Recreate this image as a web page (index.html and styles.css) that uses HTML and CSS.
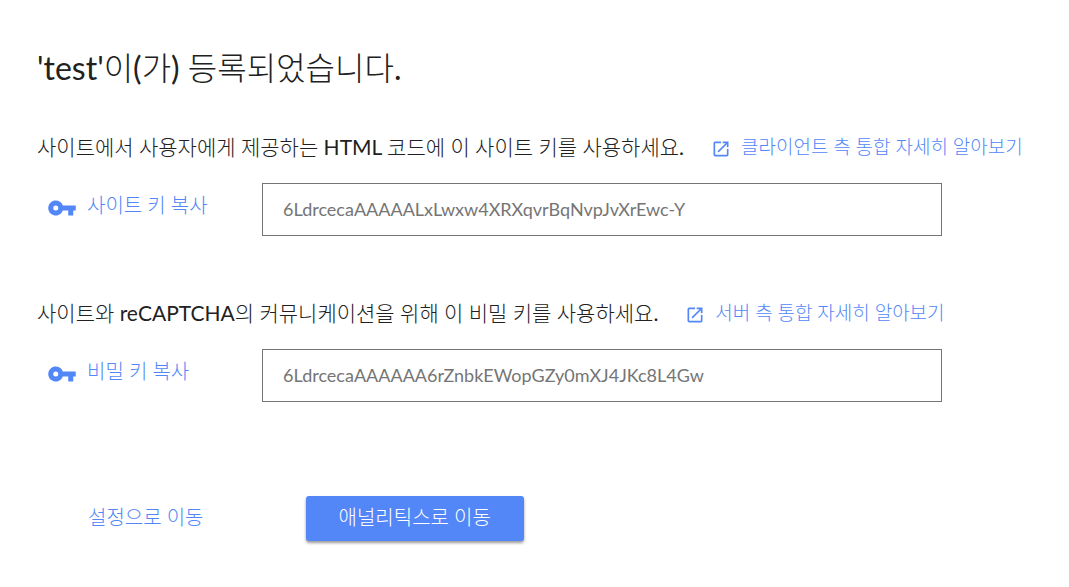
FILE: index.html
```html
<!DOCTYPE html>
<html lang="ko">
<head>
<meta charset="utf-8">
<meta name="viewport" content="width=device-width, initial-scale=1">
<title>reCAPTCHA</title>
<link rel="stylesheet" href="styles.css">
</head>
<body>
<svg class="sprite" aria-hidden="true">
  <symbol id="key" viewBox="0 0 24 24"><path d="M12.65 10A6 6 0 1 0 12.65 14H17v4h4v-4h2v-4H12.650zM7 14a2 2 0 1 1 0-4 2 2 0 0 1 0 4z"/></symbol>
  <symbol id="open" viewBox="0 0 24 24"><path d="M19 19H5V5h7V3H5a2 2 0 0 0-2 2v14a2 2 0 0 0 2 2h14a2 2 0 0 0 2-2v-7h-2v7zM14 3v2h3.590l-9.830 9.830 1.410 1.410L19 6.410V10h2V3h-7z"/></symbol>
</svg>
<main class="page">
  <h1 class="title">'test'이(가) 등록되었습니다.</h1>
  <section class="section">
    <div class="intro">
      <label class="description" for="site-key">사이트에서 사용자에게 제공하는 HTML 코드에 이 사이트 키를 사용하세요.</label>
      <a class="link" href="#client"><svg class="open-icon" aria-hidden="true"><use href="#open"/></svg>클라이언트 측 통합 자세히 알아보기</a>
    </div>
    <div class="key-row">
      <button class="copy" type="button"><svg class="key-icon" aria-hidden="true"><use href="#key"/></svg>사이트 키 복사</button>
      <input class="key-field" id="site-key" type="text" readonly value="6LdrcecaAAAAALxLwxw4XRXqvrBqNvpJvXrEwc-Y">
    </div>
  </section>
  <section class="section">
    <div class="intro">
      <label class="description" for="secret-key">사이트와 reCAPTCHA의 커뮤니케이션을 위해 이 비밀 키를 사용하세요.</label>
      <a class="link" href="#server"><svg class="open-icon" aria-hidden="true"><use href="#open"/></svg>서버 측 통합 자세히 알아보기</a>
    </div>
    <div class="key-row">
      <button class="copy" type="button"><svg class="key-icon" aria-hidden="true"><use href="#key"/></svg>비밀 키 복사</button>
      <input class="key-field" id="secret-key" type="text" readonly value="6LdrcecaAAAAAA6rZnbkEWopGZy0mXJ4JKc8L4Gw">
    </div>
  </section>
  <div class="actions">
    <button class="action" type="button">설정으로 이동</button>
    <button class="action primary" type="button">애널리틱스로 이동</button>
  </div>
</main>
</body>
</html>
```
FILE: styles.css
```css
* {
  box-sizing: border-box;
}

body {
  margin: 0;
  background: #fff;
  color: #212121;
  font-family: Lato, "Noto Sans CJK KR Light", "Noto Sans CJK KR", sans-serif;
  font-weight: 400;
}

button,
input {
  font: inherit;
}

.sprite {
  display: none;
}

.page {
  padding: 44px 32px 32px 37px;
}

.title {
  margin: 0 0 38px;
  font-size: 32px;
  font-weight: 400;
  line-height: 48px;
}

.section {
  margin-bottom: 60px;
}

.intro {
  display: flex;
  flex-wrap: wrap;
  align-items: center;
  column-gap: 27px;
  margin-bottom: 20px;
}

.description {
  font-size: 21px;
  line-height: 33px;
}

.link {
  display: flex;
  align-items: center;
  gap: 10px;
  color: #5387f8;
  font-size: 19px;
  line-height: 30px;
  text-decoration: none;
}

.open-icon {
  width: 20px;
  height: 20px;
  margin-top: 4px;
  fill: currentColor;
}

.key-row {
  display: grid;
  grid-template-columns: 225px minmax(0, 680px);
  align-items: center;
}

.copy {
  display: flex;
  align-items: center;
  gap: 10px;
  padding: 0 0 10px 10px;
  border: 0;
  background: none;
  color: #5387f8;
  font-size: 20px;
  line-height: 30px;
}

.key-icon {
  width: 30px;
  height: 30px;
  margin-top: 6px;
  fill: currentColor;
}

.key-field {
  width: 100%;
  height: 53px;
  padding: 0 20px 2px;
  border: 1px solid #757575;
  border-radius: 0;
  background: #fff;
  color: #757575;
  font-size: 18px;
}

.actions {
  display: flex;
  gap: 69px;
  padding-top: 34px;
  padding-left: 18px;
}

.action {
  height: 45px;
  padding: 0 33px 3px;
  border: 0;
  border-radius: 3px;
  background: none;
  color: #5387f8;
  font-size: 20px;
  line-height: 30px;
}

.primary {
  background: #5387f8;
  color: #fff;
  box-shadow: 0 2px 3px rgba(0, 0, 0, 0.4);
}
```
